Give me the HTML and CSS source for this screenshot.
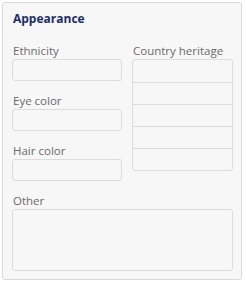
FILE: index.html
```html
<!DOCTYPE html>
<html lang="en">
<head>
    <meta charset="UTF-8">
    <meta name="viewport" content="width=device-width, initial-scale=1.0">
    <title>Appearance</title>
    <link rel="stylesheet" href="styles.css">
</head>
<body>
    <div class="card">
        <h2>Appearance</h2>

        <div class="grid">
            <div class="col">
                <div class="field">
                    <label for="ethnicity">Ethnicity</label>
                    <input type="text" id="ethnicity">
                </div>
                <div class="field">
                    <label for="eyeColor">Eye color</label>
                    <input type="text" id="eyeColor">
                </div>
                <div class="field">
                    <label for="hairColor">Hair color</label>
                    <input type="text" id="hairColor">
                </div>
            </div>

            <div class="col">
                <div class="field">
                    <label>Country heritage</label>
                    <div class="list">
                        <div class="list-row"></div>
                        <div class="list-row"></div>
                        <div class="list-row"></div>
                        <div class="list-row"></div>
                        <div class="list-row"></div>
                    </div>
                </div>
            </div>
        </div>

        <div class="field last">
            <label for="other">Other</label>
            <textarea id="other"></textarea>
        </div>
    </div>
</body>
</html>
```

FILE: styles.css
```css
body { margin: 0; background: #fff; font-family: "Open Sans", sans-serif; }
.card { margin: 2px 0 0 2px; width: 221px; padding: 8px 8px 8px 9px; background: #f7f7f7; border: 1px solid #dadada; border-radius: 3px; }
h2 { margin: 0 0 16px 1px; font-size: 12px; line-height: 16px; font-weight: bold; color: #1c2d6b; }
.grid { display: grid; grid-template-columns: 110px 101px; column-gap: 10px; }
.field { display: flex; flex-direction: column; margin-bottom: 12px; }
.field.last { margin-bottom: 0; }
label { font-size: 11.5px; line-height: 16px; color: #6a6a6a; padding-left: 1px; }
input, textarea { box-sizing: border-box; margin: 0; height: 22px; background: #f7f7f7; border: 1px solid #dcdcdc; border-radius: 3px; font-family: inherit; }
textarea { height: 62px; resize: none; }
.list { border: 1px solid #dcdcdc; border-radius: 3px; }
.list-row { height: 21px; border-top: 1px solid #dcdcdc; }
.list-row:first-child { height: 22px; border-top: none; }
```
